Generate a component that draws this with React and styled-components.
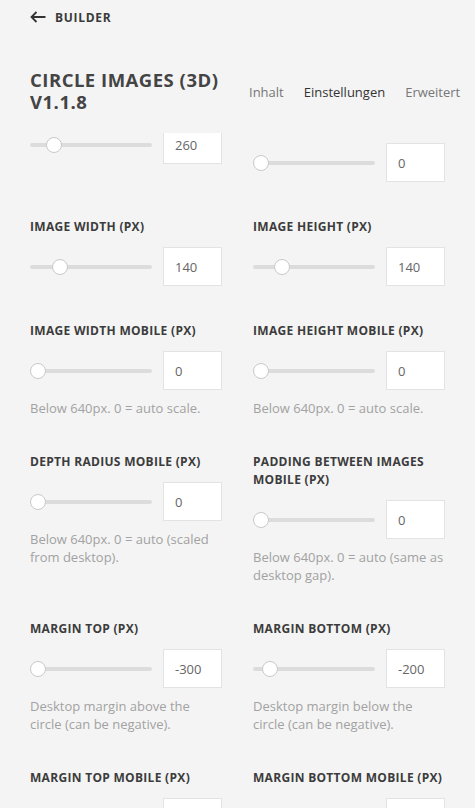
import React, { useLayoutEffect, useRef } from "react";
import styled, { createGlobalStyle } from "styled-components";

const GlobalStyle = createGlobalStyle`
  html, body {
    margin: 0;
    padding: 0;
    background: #f4f4f4;
  }
  * {
    box-sizing: border-box;
  }
`;

const Page = styled.div`
  height: 808px;
  display: flex;
  flex-direction: column;
  overflow: hidden;
  background: #f4f4f4;
  font-family: "Open Sans", "Liberation Sans", sans-serif;
`;

const Header = styled.header`
  flex: 0 0 133px;
  padding: 8px 30px 0 30px;
  background: #f4f4f4;
`;

const BackLink = styled.a`
  display: flex;
  align-items: center;
  gap: 9px;
  height: 18px;
  color: #3a3a3a;
  font-size: 12px;
  font-weight: 700;
  letter-spacing: 0.7px;
  text-decoration: none;
  cursor: pointer;
`;

const TitleRow = styled.div`
  display: flex;
  align-items: center;
  margin-top: 43px;
`;

const Title = styled.h1`
  flex: 0 0 219px;
  margin: 0;
  font-size: 18.5px;
  line-height: 22px;
  font-weight: 700;
  color: #444;
  letter-spacing: 0.5px;
`;

const Tabs = styled.nav`
  display: flex;
  gap: 20px;
  margin-top: 2px;
`;

const Tab = styled.span`
  font-size: 13px;
  color: ${props => (props.active ? "#333" : "#777")};
  cursor: pointer;
`;

const Body = styled.div`
  flex: 1;
  overflow: hidden;
  padding: 0 30px;
`;

const Grid = styled.div`
  display: grid;
  grid-template-columns: 192px 192px;
  column-gap: 31px;
  row-gap: 36px;
  align-items: start;
  padding-bottom: 200px;
`;

const Field = styled.div`
  display: flex;
  flex-direction: column;
`;

const Label = styled.label`
  font-size: 12px;
  line-height: 18px;
  font-weight: 700;
  color: #3c3c3c;
  letter-spacing: 0.3px;
  margin-bottom: 11px;
`;

const Control = styled.div`
  display: flex;
  align-items: center;
  gap: 11px;
  height: 39px;
`;

const Track = styled.div`
  position: relative;
  flex: 0 0 122px;
  height: 4px;
  border-radius: 2px;
  background: #dcdcdc;
  margin-top: 1px;
`;

const Thumb = styled.span`
  position: absolute;
  top: 50%;
  width: 16px;
  height: 16px;
  margin: -8px 0 0 -8px;
  border-radius: 50%;
  background: #fff;
  border: 1px solid #c9c9c9;
`;

const NumberBox = styled.input`
  width: 59px;
  height: 39px;
  border: 1px solid #e3e3e3;
  background: #fff;
  padding: 0 0 0 11px;
  font-family: "Open Sans", "Liberation Sans", sans-serif;
  font-size: 13px;
  color: #666;
  outline: none;
`;

const Hint = styled.p`
  margin: 9px 0 0 0;
  font-size: 13px;
  line-height: 18px;
  color: #a2a2a2;
`;

const fields = [
  { label: "Depth Radius (px)", value: "260", pos: 0.15 },
  { label: "Padding between images desktop (px)", value: "0", pos: 0 },
  { label: "Image Width (px)", value: "140", pos: 0.21 },
  { label: "Image Height (px)", value: "140", pos: 0.2 },
  { label: "Image Width Mobile (px)", value: "0", pos: 0, hint: "Below 640px. 0 = auto scale." },
  { label: "Image Height Mobile (px)", value: "0", pos: 0, hint: "Below 640px. 0 = auto scale." },
  { label: "Depth Radius Mobile (px)", value: "0", pos: 0, hint: "Below 640px. 0 = auto (scaled from desktop)." },
  { label: "Padding between images Mobile (px)", value: "0", pos: 0, hint: "Below 640px. 0 = auto (same as desktop gap)." },
  { label: "Margin Top (px)", value: "-300", pos: 0, hint: "Desktop margin above the circle (can be negative)." },
  { label: "Margin Bottom (px)", value: "-200", pos: 0.085, hint: "Desktop margin below the circle (can be negative)." },
  { label: "Margin Top Mobile (px)", value: "0", pos: 0 },
  { label: "Margin Bottom Mobile (px)", value: "0", pos: 0 },
];

const BackArrow = () => (
  <svg width="16" height="12" viewBox="0 0 16 12" fill="none">
    <path d="M15.5 6H1.5M6.5 1L1.5 6L6.5 11" stroke="#333" strokeWidth="1.8" />
  </svg>
);

const Slider = ({ pos }) => (
  <Track>
    <Thumb style={{ left: `${8 + pos * 106}px` }} />
  </Track>
);

const SettingField = ({ label, value, pos, hint }) => (
  <Field>
    <Label>{label.toUpperCase()}</Label>
    <Control>
      <Slider pos={pos} />
      <NumberBox type="text" defaultValue={value} />
    </Control>
    {hint && <Hint>{hint}</Hint>}
  </Field>
);

const App = () => {
  const bodyRef = useRef(null);

  // the panel is shown scrolled a little
  useLayoutEffect(() => {
    if (bodyRef.current) bodyRef.current.scrollTop = 37;
  }, []);

  return (
    <Page>
      <GlobalStyle />
      <Header>
        <BackLink>
          <BackArrow />
          BUILDER
        </BackLink>
        <TitleRow>
          <Title>CIRCLE IMAGES (3D) V1.1.8</Title>
          <Tabs>
            <Tab>Inhalt</Tab>
            <Tab active>Einstellungen</Tab>
            <Tab>Erweitert</Tab>
          </Tabs>
        </TitleRow>
      </Header>
      <Body ref={bodyRef}>
        <Grid>
          {fields.map(f => (
            <SettingField key={f.label} {...f} />
          ))}
        </Grid>
      </Body>
    </Page>
  );
};

export default App;
